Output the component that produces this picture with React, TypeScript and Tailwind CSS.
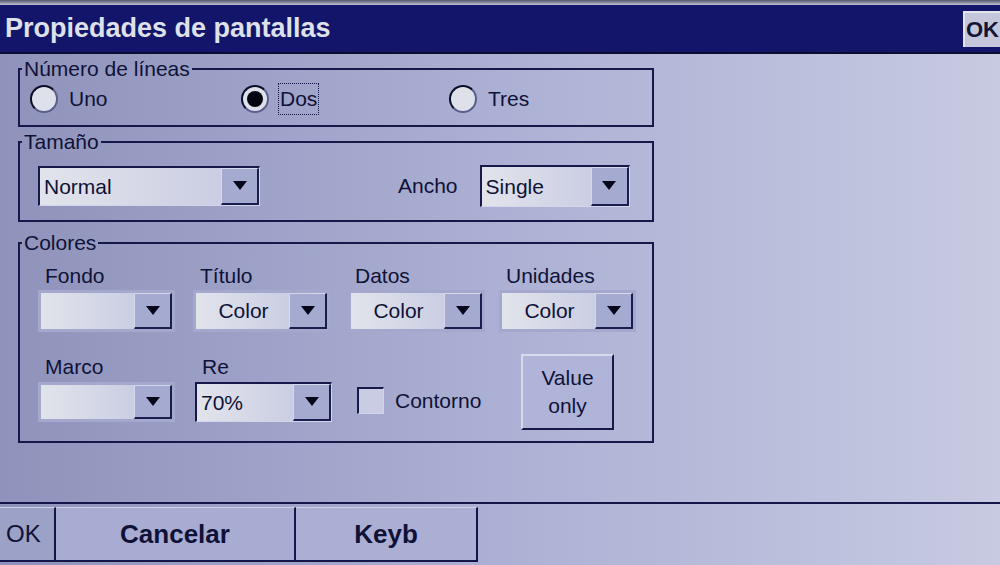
import React from 'react';

// Windows CE style "Propiedades de pantallas" dialog

function Arrow() {
  return (
    <svg width="16" height="10" viewBox="0 0 16 10">
      <path d="M1 0H15L8 9Z" fill="#06061a" />
    </svg>
  );
}

function DropButton() {
  return (
    <div className="flex w-[38px] shrink-0 items-center justify-center border-t border-l border-t-[#d5d8ea] border-l-[#d5d8ea] border-r-2 border-b-2 border-r-[#1b1d4e] border-b-[#1b1d4e] bg-[#a5aad0]">
      <Arrow />
    </div>
  );
}

type ComboProps = { size: string; text?: string; center?: boolean; sunken?: boolean };

function Combo({ size, text = '', center = false, sunken = false }: ComboProps) {
  const frame = sunken
    ? 'border-t-2 border-l-2 border-t-[#17194a] border-l-[#17194a] border-b border-r border-b-[#d3d6ea] border-r-[#d3d6ea]'
    : 'border-[3px] border-[#a3a8cc]';
  return (
    <div className={`flex shrink-0 ${size} ${frame}`}>
      <div
        className={`flex flex-1 items-center bg-linear-to-r from-[#e2e4eb] to-[#cbcee3] ${
          center ? 'justify-center pl-[2px]' : 'pl-[4px]'
        }`}
      >
        {text}
      </div>
      <DropButton />
    </div>
  );
}

function Radio({ checked = false }: { checked?: boolean }) {
  return (
    <div className="flex h-[28px] w-[28px] shrink-0 items-center justify-center rounded-full border-2 border-t-[#0c0d26] border-l-[#0c0d26] border-r-[#5a5e8c] border-b-[#5a5e8c] bg-[#dfe1ea]">
      {checked && <div className="h-[16px] w-[16px] rounded-full bg-[#050510]" />}
    </div>
  );
}

function Group({ title, className, children }: { title: string; className: string; children: React.ReactNode }) {
  return (
    <fieldset className={`ml-[18px] w-[636px] border-2 border-[#16184a] p-0 ${className}`}>
      <legend className="ml-[2px] px-[2px] leading-[24px]">{title}</legend>
      {children}
    </fieldset>
  );
}

export default function App() {
  return (
    <div className="flex h-[565px] w-[1000px] flex-col overflow-hidden bg-linear-to-r from-[#8f93bb] via-[#acb0d4] to-[#c7cae1] font-['Liberation_Sans',Arial,sans-serif] text-[21px] text-[#0f1236]">
      {/* screen edge */}
      <div className="h-[5px] bg-linear-to-b from-[#55586e] to-[#c3c5d2]" />

      {/* Title bar */}
      <div className="flex h-[47px] items-center justify-between bg-[#121569] pl-[5px]">
        <span className="text-[27px] font-bold text-[#dfe1ea]">Propiedades de pantallas</span>
        <div className="flex h-[36px] w-[37px] items-center border-t-2 border-l-2 border-[#e2e4ee] bg-[#c4c7db] pl-[1px] text-[22px] font-bold text-[#121434]">
          OK
        </div>
      </div>
      <div className="h-[2px] bg-[#0b0c30]" />

      <div className="flex flex-1 flex-col">
        {/* Número de líneas */}
        <Group title="Número de líneas" className="mt-[3px]">
          <div className="flex h-[36px] items-center pl-[10px]">
            <div className="flex w-[211px] items-center gap-[11px]">
              <Radio />
              <span>Uno</span>
            </div>
            <div className="flex w-[208px] items-center gap-[9px]">
              <Radio checked />
              <span className="border border-dotted border-[#16184a] px-[1px] leading-[30px]">Dos</span>
            </div>
            <div className="flex items-center gap-[11px]">
              <Radio />
              <span>Tres</span>
            </div>
          </div>
          <div className="h-[8px]" />
        </Group>

        {/* Tamaño */}
        <Group title="Tamaño" className="mt-[3px]">
          <div className="flex items-center pt-[11px] pb-[13px] pl-[18px]">
            <Combo size="w-[222px] h-[40px]" text="Normal" sunken />
            <span className="ml-[138px]">Ancho</span>
            <Combo size="ml-[22px] w-[150px] h-[42px]" text="Single" sunken />
          </div>
        </Group>

        {/* Colores */}
        <Group title="Colores" className="mt-[9px]">
          <div className="pt-[9px] pb-[19px] pl-[18px]">
            <div className="grid grid-cols-[155px_155px_151px_140px]">
              {['Fondo', 'Título', 'Datos', 'Unidades'].map((label, i) => (
                <div key={label} className="flex flex-col">
                  <span className="mb-[2px] pl-[7px] leading-[24px]">{label}</span>
                  <Combo size="w-[137px] h-[42px]" text={i === 0 ? '' : 'Color'} center />
                </div>
              ))}
            </div>

            <div className="mt-[23px] flex h-[67px] items-start">
              <div className="flex w-[155px] flex-col">
                <span className="mb-[3px] pl-[7px] leading-[24px]">Marco</span>
                <Combo size="w-[137px] h-[40px]" />
              </div>
              <div className="flex w-[155px] flex-col">
                <span className="mb-[3px] pl-[9px] leading-[24px]">Re</span>
                <Combo size="ml-[2px] w-[137px] h-[40px]" text="70%" sunken />
              </div>
              <div className="flex w-[164px] items-center pt-[30px] pl-[9px]">
                <div className="h-[27px] w-[27px] shrink-0 border-t-2 border-l-2 border-t-[#17194a] border-l-[#17194a] border-b border-r border-b-[#d3d6ea] border-r-[#d3d6ea] bg-[#c9cce2]" />
                <span className="ml-[11px] w-[88px] overflow-hidden whitespace-nowrap">Contorno</span>
              </div>
              <div className="mt-[-1px] ml-[9px] flex h-[76px] w-[93px] shrink-0 flex-col items-center justify-center border-t-2 border-l-2 border-t-[#d8dbec] border-l-[#d8dbec] border-r-2 border-b-2 border-r-[#17194a] border-b-[#17194a] bg-[#b0b4d8] leading-[28px]">
                <span>Value</span>
                <span>only</span>
              </div>
            </div>
          </div>
        </Group>
      </div>

      {/* Bottom command bar */}
      <div className="flex h-[63px] flex-col">
        <div className="h-[2px] bg-[#14164a]" />
        <div className="mt-[3px] flex h-[55px] w-[478px] border-b-2 border-[#14164a] text-[26px] font-bold">
          <div className="flex w-[56px] items-center border-r-2 border-r-[#14164a] border-t border-t-[#cfd2e6] bg-[#9ca1c8] pl-[6px] text-[24px] font-normal">
            OK
          </div>
          <div className="flex w-[240px] items-center justify-center border-r-2 border-r-[#14164a] border-t border-t-[#cfd2e6] bg-[#a8acd2]">
            Cancelar
          </div>
          <div className="flex flex-1 items-center justify-center border-r-2 border-r-[#14164a] border-t border-t-[#cfd2e6] bg-[#abafd4]">
            Keyb
          </div>
        </div>
      </div>
    </div>
  );
}
